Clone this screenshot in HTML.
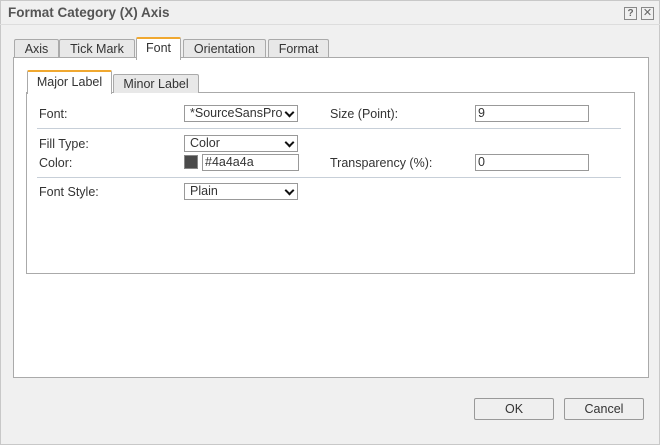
<!DOCTYPE html><html><head><style>
body{margin:0;width:660px;height:445px;background:#f0f0f0;font-family:"Liberation Sans",Arial,sans-serif;font-size:12.5px;color:#333;position:relative;overflow:hidden}
.a{position:absolute}
.dlg{left:0;top:0;width:658px;height:443px;border:1px solid #c8c8c8;background:#f0f0f0}
.title{left:8px;top:5px;font-weight:bold;font-size:13.5px;color:#555}
.tb{border:1px solid #aaa;border-bottom:none;background:#e8e8e8;height:17px;top:39px;text-align:center;line-height:18px;border-radius:2px 2px 0 0}
.sel{border:1px solid #999;background:#fff;height:15px;line-height:15px;padding-left:5px;box-sizing:content-box;overflow:hidden;white-space:nowrap}
.sel:after{content:"";position:absolute;right:4px;top:3px;width:5px;height:5px;border-right:2px solid #111;border-bottom:2px solid #111;transform:rotate(45deg)}
.inp{border:1px solid #999;background:#fff;height:15px;line-height:15px;padding-left:2px}
.btn{border:1px solid #999;background:#efefef;height:20px;line-height:20px;text-align:center;border-radius:2px}
.hr{height:1px;background:#c7cfd8;left:37px;width:584px}
</style></head><body>
<div class="a dlg"></div>
<div class="a" style="left:0;top:24px;width:660px;height:1px;background:#ddd"></div>
<div class="a title">Format Category (X) Axis</div>
<div class="a" style="left:624px;top:7px;width:11px;height:11px;border:1px solid #888;font-size:10px;line-height:11px;text-align:center;color:#666;font-weight:bold">?</div>
<div class="a" style="left:641px;top:7px;width:11px;height:11px;border:1px solid #888;font-size:11px;line-height:10px;text-align:center;color:#666">✕</div>
<div class="a" style="left:13px;top:57px;width:634px;height:319px;border:1px solid #aaa;background:#fff"></div>
<div class="a tb" style="left:14px;width:43px">Axis</div>
<div class="a tb" style="left:59px;width:74px">Tick Mark</div>
<div class="a tb" style="left:136px;top:37px;width:43px;height:21px;background:#fff;border-top:2px solid #f0a830;line-height:19px">Font</div>
<div class="a tb" style="left:183px;width:81px">Orientation</div>
<div class="a tb" style="left:268px;width:59px">Format</div>
<div class="a" style="left:26px;top:92px;width:607px;height:180px;border:1px solid #aaa;background:#fff"></div>
<div class="a tb" style="left:27px;top:70px;width:83px;height:22px;background:#fff;border-top:2px solid #f0a830;line-height:20px">Major Label</div>
<div class="a tb" style="left:113px;top:74px;width:84px;height:18px">Minor Label</div>
<div class="a" style="left:39px;top:107px">Font:</div>
<div class="a sel" style="left:184px;top:105px;width:107px">*SourceSansPro</div>
<div class="a" style="left:330px;top:107px">Size (Point):</div>
<div class="a inp" style="left:475px;top:105px;width:110px">9</div>
<div class="a hr" style="top:128px"></div>
<div class="a" style="left:39px;top:137px">Fill Type:</div>
<div class="a sel" style="left:184px;top:135px;width:107px">Color</div>
<div class="a" style="left:39px;top:156px">Color:</div>
<div class="a" style="left:184px;top:155px;width:14px;height:14px;background:#4a4a4a;border:1px solid #888;box-sizing:border-box"></div>
<div class="a inp" style="left:202px;top:154px;width:93px">#4a4a4a</div>
<div class="a" style="left:330px;top:156px">Transparency (%):</div>
<div class="a inp" style="left:475px;top:154px;width:110px">0</div>
<div class="a hr" style="top:177px"></div>
<div class="a" style="left:39px;top:185px">Font Style:</div>
<div class="a sel" style="left:184px;top:183px;width:107px">Plain</div>
<div class="a btn" style="left:474px;top:398px;width:78px">OK</div>
<div class="a btn" style="left:564px;top:398px;width:78px">Cancel</div>
</body></html>
